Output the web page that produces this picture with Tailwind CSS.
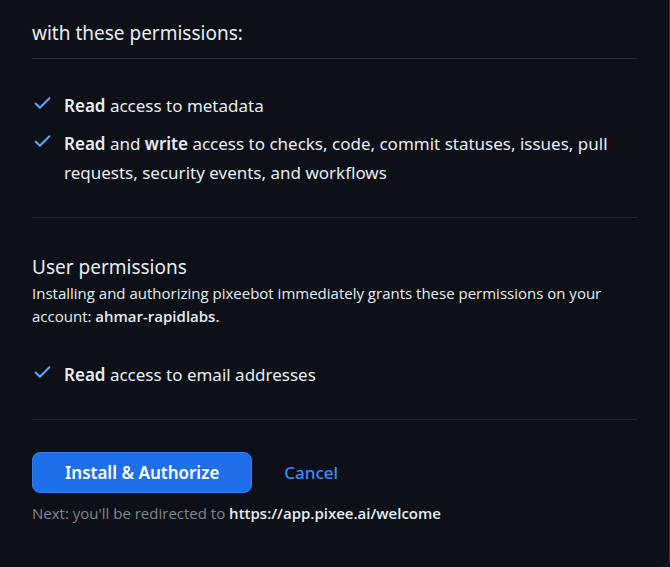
<!DOCTYPE html>
<html lang="en">
<head>
<meta charset="utf-8">
<meta name="viewport" content="width=device-width, initial-scale=1">
<title>Install &amp; Authorize</title>
<script src="https://cdn.jsdelivr.net/npm/@tailwindcss/browser@4"></script>
</head>
<body class="bg-[#0d1117] text-[#e6edf3] font-['Noto_Sans','Open_Sans',sans-serif]">
<svg class="hidden" aria-hidden="true">
  <symbol id="check" viewBox="0 0 16 16"><path fill="currentColor" d="M13.78 4.22a.75.75 0 0 1 0 1.06l-7.25 7.25a.75.75 0 0 1-1.06 0L2.22 9.28a.751.751 0 0 1 .018-1.042.751.751 0 0 1 1.042-.018L6 10.94l6.72-6.72a.75.75 0 0 1 1.06 0Z"/></symbol>
</svg>
<main class="min-h-screen rounded-b-lg border-r border-[#30363d] px-8 pt-[18px]">
  <h2 class="border-b border-[#272c33] pb-[10px] text-[19px] leading-[30px]">with these permissions:</h2>
  <ul class="flex flex-col gap-[9px] border-b border-[#21262d] pt-8 pb-[30px] text-[17px] leading-[29px]">
    <li class="flex gap-[11px]"><svg class="mt-px size-[21px] shrink-0 text-[#58a6ff]" aria-hidden="true"><use href="#check"/></svg><span><b class="font-semibold">Read</b> access to metadata</span></li>
    <li class="flex gap-[11px]"><svg class="mt-px size-[21px] shrink-0 text-[#58a6ff]" aria-hidden="true"><use href="#check"/></svg><span><b class="font-semibold">Read</b> and <b class="font-semibold">write</b> access to checks, code, commit statuses, issues, pull requests, security events, and workflows</span></li>
  </ul>
  <section class="border-b border-[#21262d] pt-[34px] pb-[30px]">
    <h2 class="text-[19px] leading-[30px]">User permissions</h2>
    <p class="font-['Open_Sans',sans-serif] text-[15px] leading-[23px]">Installing and authorizing pixeebot immediately grants these permissions on your account: <b class="font-semibold">ahmar-rapidlabs.</b></p>
    <ul class="pt-8 text-[17px] leading-[29px]">
      <li class="flex gap-[11px]"><svg class="mt-px size-[21px] shrink-0 text-[#58a6ff]" aria-hidden="true"><use href="#check"/></svg><span><b class="font-semibold">Read</b> access to email addresses</span></li>
    </ul>
  </section>
  <div class="flex items-center gap-8 pt-8 text-[17px] font-semibold">
    <button type="button" class="h-[41px] rounded-lg border border-[#377ef0] bg-[#1f6feb] px-8 text-white">Install &amp; Authorize</button>
    <a href="#" class="font-medium text-[#388bfd]">Cancel</a>
  </div>
  <p class="pt-[9px] font-['Open_Sans',sans-serif] text-[15px] leading-[23px] text-[#7d8590]">Next: you'll be redirected to <b class="font-semibold text-[#e6edf3]">https://app.pixee.ai/welcome</b></p>
</main>
</body>
</html>
